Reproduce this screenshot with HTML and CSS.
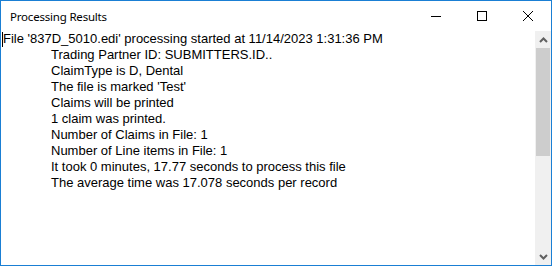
FILE: index.html
```html
<!DOCTYPE html>
<html lang="en">
<head>
  <meta charset="UTF-8">
  <title>Processing Results</title>
  <link rel="stylesheet" href="styles.css">
</head>
<body>
  <div class="window">
    <div class="title-bar">
      <span class="title">Processing Results</span>
      <div class="controls">
        <span class="ctl">
          <svg width="10" height="10" viewBox="0 0 10 10"><path d="M0 5.5h10" stroke="#000" stroke-width="1"/></svg>
        </span>
        <span class="ctl">
          <svg width="10" height="10" viewBox="0 0 10 10"><rect x="0.5" y="0.5" width="9" height="9" fill="none" stroke="#000" stroke-width="1"/></svg>
        </span>
        <span class="ctl">
          <svg width="10" height="10" viewBox="0 0 10 10"><path d="M0 0L10 10M10 0L0 10" stroke="#000" stroke-width="1"/></svg>
        </span>
      </div>
    </div>
    <div class="client">
      <div class="log">
        <div class="line first"><span class="caret"></span>File '837D_5010.edi' processing started at 11/14/2023 1:31:36 PM</div>
        <div class="line">Trading Partner ID: SUBMITTERS.ID..</div>
        <div class="line">ClaimType is D, Dental</div>
        <div class="line">The file is marked 'Test'</div>
        <div class="line">Claims will be printed</div>
        <div class="line">1 claim was printed.</div>
        <div class="line">Number of Claims in File: 1</div>
        <div class="line">Number of Line items in File: 1</div>
        <div class="line">It took 0 minutes, 17.77 seconds to process this file</div>
        <div class="line">The average time was 17.078 seconds per record</div>
      </div>
      <div class="scrollbar">
        <div class="arrow">
          <svg width="9" height="6" viewBox="0 0 9 6"><path d="M1 5L4.5 1.5L8 5" fill="none" stroke="#606060" stroke-width="2"/></svg>
        </div>
        <div class="thumb"></div>
        <div class="track"></div>
        <div class="arrow">
          <svg width="9" height="6" viewBox="0 0 9 6"><path d="M1 1L4.5 4.5L8 1" fill="none" stroke="#606060" stroke-width="2"/></svg>
        </div>
      </div>
    </div>
  </div>
</body>
</html>
```

FILE: styles.css
```css
body {
  margin: 0;
  padding: 0;
  background: #fff;
}

.window {
  width: 552px;
  height: 266px;
  box-sizing: border-box;
  border: 1px solid #1a7fd4;
  display: flex;
  flex-direction: column;
  background: #fff;
}

.title-bar {
  height: 30px;
  display: flex;
  align-items: center;
  justify-content: space-between;
  padding-left: 9px;
}

.title {
  font-family: "Noto Sans", sans-serif;
  font-size: 11.5px;
  letter-spacing: -0.2px;
  color: #000;
  padding-top: 1px;
}

.controls {
  display: flex;
  height: 100%;
}

.ctl {
  width: 46px;
  display: flex;
  align-items: center;
  justify-content: center;
}

.client {
  flex: 1;
  display: flex;
}

.log {
  flex: 1;
  font-family: "Liberation Sans", Arial, sans-serif;
  font-size: 13px;
  line-height: 16px;
  color: #000;
  padding-left: 50px;
  padding-top: 0;
}

.line.first {
  margin-left: -48px;
  position: relative;
}

.caret {
  position: absolute;
  left: -1px;
  top: 1px;
  width: 1px;
  height: 15px;
  background: #000;
}

.scrollbar {
  width: 16px;
  background: #f0f0f0;
  display: flex;
  flex-direction: column;
}

.arrow {
  height: 17px;
  display: flex;
  align-items: center;
  justify-content: center;
}

.thumb {
  height: 108px;
  background: #cdcdcd;
  margin: 0 1px;
}

.track {
  flex: 1;
}
```
